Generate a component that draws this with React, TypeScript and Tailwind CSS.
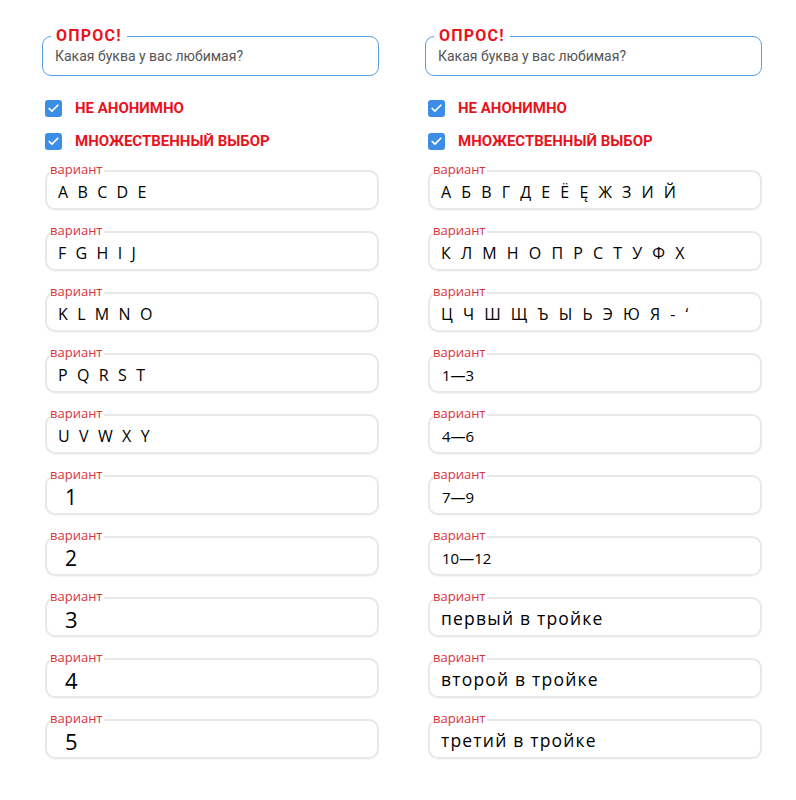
import { Check } from 'lucide-react';

type Option = { text: string; cls: string };

const letters = 'pl-[11px] text-[16px] tracking-[2.6px]';
const digits = 'pl-[18px] text-[21px]';
const bigDigits = 'pl-[18px] text-[22px]';
const words = 'pl-[11px] text-[17.5px] tracking-[1.2px]';

const left: Option[] = [
  { text: 'A B C D E', cls: letters },
  { text: 'F G H I J', cls: letters },
  { text: 'K L M N O', cls: letters },
  { text: 'P Q R S T', cls: letters },
  { text: 'U V W X Y', cls: letters },
  { text: '1', cls: digits },
  { text: '2', cls: digits },
  { text: '3', cls: bigDigits },
  { text: '4', cls: bigDigits },
  { text: '5', cls: bigDigits },
];

const cyr = 'pl-[11px] text-[16px] tracking-[3px]';
const range = 'pl-[12px] text-[15px]';

const right: Option[] = [
  { text: 'А Б В Г Д Е Ё Ę Ж З И Й', cls: cyr },
  { text: 'К Л М Н О П Р С Т У Ф Х', cls: cyr },
  { text: 'Ц Ч Ш Щ Ъ Ы Ь Э Ю Я - ‘', cls: cyr },
  { text: '1—3', cls: range },
  { text: '4—6', cls: range },
  { text: '7—9', cls: range },
  { text: '10—12', cls: range },
  { text: 'первый в тройке', cls: words },
  { text: 'второй в тройке', cls: words },
  { text: 'третий в тройке', cls: words },
];

function Checkbox({ label }: { label: string }) {
  return (
    <div className="flex items-center gap-[13px] ml-[3px] h-[17px]">
      <span className="flex h-[17px] w-[17px] items-center justify-center rounded-[3px] bg-[#3b8de6]">
        <Check className="h-[13px] w-[13px] text-white" strokeWidth={3.2} />
      </span>
      <span className="font-['Roboto'] text-[15px] font-bold text-[#e8141d]">{label}</span>
    </div>
  );
}

function Variant({ opt }: { opt: Option }) {
  return (
    <div className="relative ml-[3px] flex h-[40px] items-center rounded-[10px] border-2 border-[#e8e8e8] pt-[4px] shadow-[0_1px_1px_rgba(0,0,0,0.04)]">
      <span className="absolute left-[3px] top-[-10px] bg-white pr-[2px] font-['Open_Sans'] text-[13px] leading-[14px] text-[#d8343c]">
        вариант
      </span>
      <span className={`font-['Open_Sans'] leading-none text-black ${opt.cls}`}>{opt.text}</span>
    </div>
  );
}

function Column({ options }: { options: Option[] }) {
  return (
    <div className="flex flex-col">
      <div className="relative h-[40px] rounded-[9px] border-[1.5px] border-[#5b9fe6]">
        <span className="absolute left-[8px] top-[-10px] bg-white px-[5px] font-['Roboto'] text-[16px] font-bold leading-[17px] tracking-[1.2px] text-[#e8141d]">
          ОПРОС!
        </span>
        <div className="pl-[12px] pt-[9px] font-['Roboto'] text-[14px] text-[#555]">
          Какая буква у вас любимая?
        </div>
      </div>
      <div className="mt-[24px] flex flex-col gap-[16px]">
        <Checkbox label="НЕ АНОНИМНО" />
        <Checkbox label="МНОЖЕСТВЕННЫЙ ВЫБОР" />
      </div>
      <div className="mt-[20px] flex flex-col gap-[21px]">
        {options.map((o, i) => (
          <Variant key={i} opt={o} />
        ))}
      </div>
    </div>
  );
}

export default function App() {
  return (
    <div className="h-[800px] w-[796px] bg-white">
      <div className="grid grid-cols-[337px_337px] gap-x-[46px] pl-[42px] pt-[36px]">
        <Column options={left} />
        <Column options={right} />
      </div>
    </div>
  );
}
